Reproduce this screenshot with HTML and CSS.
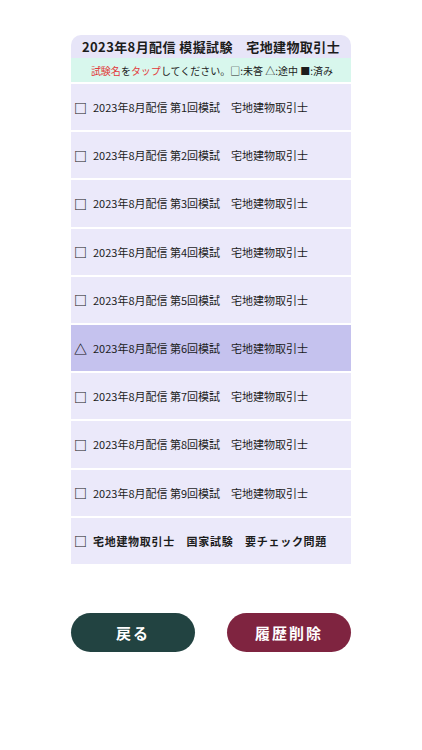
FILE: index.html
```html
<!DOCTYPE html>
<html lang="ja">
<head>
<meta charset="utf-8">
<title>模擬試験</title>
<link rel="stylesheet" href="styles.css">
</head>
<body>
<div class="page">
  <div class="panel">
    <div class="title">2023年8月配信 模擬試験　宅地建物取引士</div>
    <div class="hint"><span class="red">試験名</span>を<span class="red">タップ</span>してください。□:未答 △:途中 ■:済み</div>
    <ul class="list">
      <li class="row"><span class="mark">□</span><span class="label">2023年8月配信 第1回模試　宅地建物取引士</span></li>
      <li class="row"><span class="mark">□</span><span class="label">2023年8月配信 第2回模試　宅地建物取引士</span></li>
      <li class="row"><span class="mark">□</span><span class="label">2023年8月配信 第3回模試　宅地建物取引士</span></li>
      <li class="row"><span class="mark">□</span><span class="label">2023年8月配信 第4回模試　宅地建物取引士</span></li>
      <li class="row"><span class="mark">□</span><span class="label">2023年8月配信 第5回模試　宅地建物取引士</span></li>
      <li class="row active"><span class="mark">△</span><span class="label">2023年8月配信 第6回模試　宅地建物取引士</span></li>
      <li class="row"><span class="mark">□</span><span class="label">2023年8月配信 第7回模試　宅地建物取引士</span></li>
      <li class="row"><span class="mark">□</span><span class="label">2023年8月配信 第8回模試　宅地建物取引士</span></li>
      <li class="row"><span class="mark">□</span><span class="label">2023年8月配信 第9回模試　宅地建物取引士</span></li>
      <li class="row"><span class="mark">□</span><span class="label bold">宅地建物取引士　国家試験　要チェック問題</span></li>
    </ul>
  </div>
  <div class="buttons">
    <button class="btn back">戻る</button>
    <button class="btn delete">履歴削除</button>
  </div>
</div>
</body>
</html>
```

FILE: styles.css
```css
* { box-sizing: border-box; }
html, body {
  margin: 0;
  padding: 0;
  background: #ffffff;
}
body {
  font-family: "Noto Sans CJK JP", "Noto Sans", sans-serif;
  color: #1c1c1c;
}
.page {
  width: 280px;
  margin: 0 auto;
  padding-top: 35px;
}
.panel {
  display: flex;
  flex-direction: column;
}
.title {
  background: #e7e5f8;
  border-radius: 10px 10px 0 0;
  height: 23px;
  display: flex;
  align-items: center;
  justify-content: center;
  font-size: 13px;
  font-weight: 700;
  letter-spacing: 0.4px;
  white-space: nowrap;
}
.hint {
  background: #d8f7ed;
  height: 24px;
  display: flex;
  align-items: center;
  justify-content: center;
  padding-left: 2px;
  font-size: 10px;
  white-space: nowrap;
}
.red { color: #e2393a; }
.list {
  list-style: none;
  margin: 2px 0 0 0;
  padding: 0;
  display: flex;
  flex-direction: column;
  gap: 2px;
}
.row {
  background: #ebe9fa;
  height: 46.2px;
  display: flex;
  align-items: center;
  padding-left: 3px;
  gap: 6px;
  font-size: 11px;
  white-space: nowrap;
}
.row.active { background: #c5c2ee; }
.mark {
  font-size: 13px;
  font-weight: 700;
  width: 13px;
  text-align: center;
  color: #111111;
}
.label.bold {
  font-weight: 700;
  letter-spacing: 0.7px;
}
.buttons {
  display: flex;
  justify-content: space-between;
  margin-top: 49px;
}
.btn {
  width: 124px;
  height: 39px;
  border: none;
  border-radius: 20px;
  color: #ffffff;
  font-family: "Noto Sans CJK JP", "Noto Sans", sans-serif;
  font-size: 15px;
  font-weight: 700;
  letter-spacing: 2px;
  padding: 0;
}
.back { background: #224341; }
.delete { background: #7f2440; }
```
